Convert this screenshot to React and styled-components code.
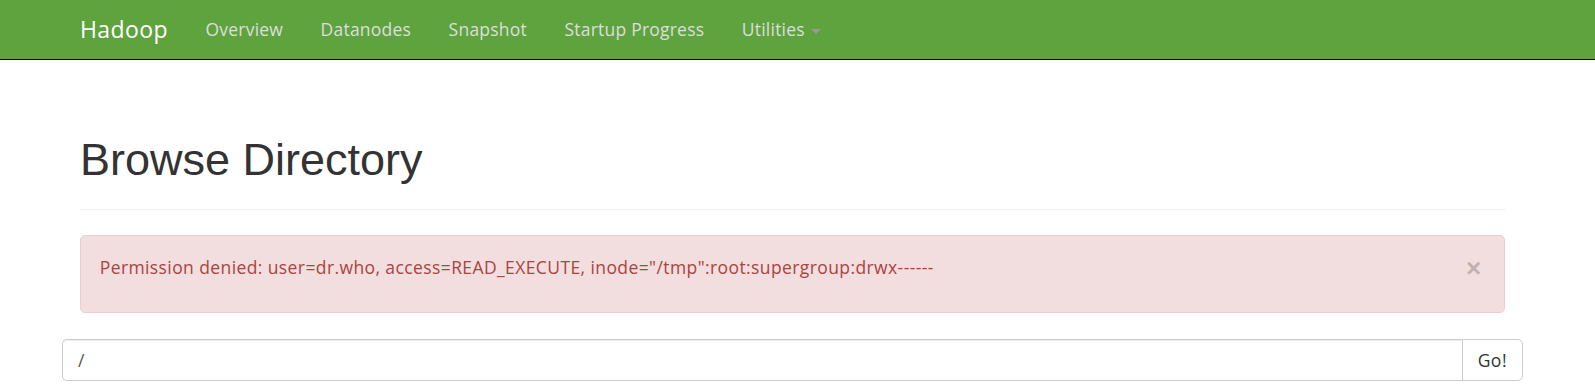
import React from "react";
import styled, { createGlobalStyle } from "styled-components";

const GlobalStyle = createGlobalStyle`
  html, body { margin: 0; padding: 0; background: #fff; }
  body { font-family: "Open Sans", "Noto Sans", sans-serif; color: #333; }
  * { box-sizing: border-box; }
`;

const Navbar = styled.nav`
  height: 60px;
  background: #5fa33e;
  border-bottom: 1px solid #000;
`;

const Container = styled.div`
  width: 1425px;
  margin-left: 80px;
`;

const NavInner = styled(Container)`
  display: flex;
  align-items: center;
  height: 59px;
`;

const Brand = styled.a`
  margin-left: -18.75px;
  padding: 0 18.75px;
  font-size: 23px;
  letter-spacing: 0.4px;
  color: #fff;
  text-decoration: none;
  line-height: 59px;
`;

const NavList = styled.ul`
  display: flex;
  list-style: none;
  margin: 0;
  padding: 0;
`;

const NavLink = styled.a`
  display: flex;
  align-items: center;
  gap: 6px;
  padding: 0 18.75px;
  font-size: 17.5px;
  letter-spacing: 0.22px;
  line-height: 59px;
  color: #ddd;
  text-decoration: none;
`;

const Caret = styled.span`
  width: 0;
  height: 0;
  border-top: 5px solid #999;
  border-left: 5px solid transparent;
  border-right: 5px solid transparent;
  margin-top: 3px;
`;

const PageHeader = styled.div`
  margin-top: 75px;
  padding-bottom: 12px;
  border-bottom: 1px solid #eee;
`;

const Title = styled.h1`
  margin: 0 0 12.5px;
  font-family: "Liberation Sans", Arial, sans-serif;
  font-weight: 400;
  font-size: 45px;
  line-height: 49.5px;
  color: #333;
`;

const Alert = styled.div`
  margin-top: 25px;
  display: flex;
  justify-content: space-between;
  align-items: flex-start;
  padding: 18.75px 18.75px 31px;
  background: #f2dede;
  border: 1px solid #ebccd1;
  border-radius: 5px;
  color: #a94442;
  font-size: 17.5px;
  letter-spacing: 0.4px;
  line-height: 25px;
`;

const Close = styled.button`
  border: 0;
  background: transparent;
  padding: 0;
  margin: 0 4px 0 0;
  font-family: "Liberation Sans", Arial, sans-serif;
  font-size: 26px;
  font-weight: 700;
  line-height: 1;
  color: #000;
  opacity: 0.2;
  cursor: pointer;
`;

const InputGroup = styled.form`
  display: flex;
  margin: 26px -18px 0;
  height: 42.5px;
`;

const TextInput = styled.input`
  flex: 1;
  min-width: 0;
  height: 100%;
  padding: 0 15px;
  border: 1px solid #ccc;
  border-right: 0;
  border-radius: 5px 0 0 5px;
  font-family: "Open Sans", "Noto Sans", sans-serif;
  font-size: 17.5px;
  color: #555;
  outline: none;
  box-shadow: inset 0 1px 1px rgba(0, 0, 0, 0.075);
`;

const GoButton = styled.button`
  height: 100%;
  padding: 0 15px;
  border: 1px solid #ccc;
  border-radius: 0 5px 5px 0;
  background: #fff;
  font-family: "Open Sans", "Noto Sans", sans-serif;
  font-size: 17.5px;
  letter-spacing: 0.5px;
  color: #333;
  cursor: pointer;
`;

const navItems = ["Overview", "Datanodes", "Snapshot", "Startup Progress"];

export default function App() {
  return (
    <>
      <GlobalStyle />
      <Navbar>
        <NavInner>
          <Brand href="#">Hadoop</Brand>
          <NavList>
            {navItems.map((item) => (
              <li key={item}>
                <NavLink href="#">{item}</NavLink>
              </li>
            ))}
            <li>
              <NavLink href="#">
                Utilities <Caret />
              </NavLink>
            </li>
          </NavList>
        </NavInner>
      </Navbar>
      <Container>
        <PageHeader>
          <Title>Browse Directory</Title>
        </PageHeader>
        <Alert>
          <span>
            Permission denied: user=dr.who, access=READ_EXECUTE,
            inode="/tmp":root:supergroup:drwx------
          </span>
          <Close type="button" aria-label="Close">
            ×
          </Close>
        </Alert>
        <InputGroup onSubmit={(e) => e.preventDefault()}>
          <TextInput type="text" defaultValue="/" />
          <GoButton type="button">Go!</GoButton>
        </InputGroup>
      </Container>
    </>
  );
}
